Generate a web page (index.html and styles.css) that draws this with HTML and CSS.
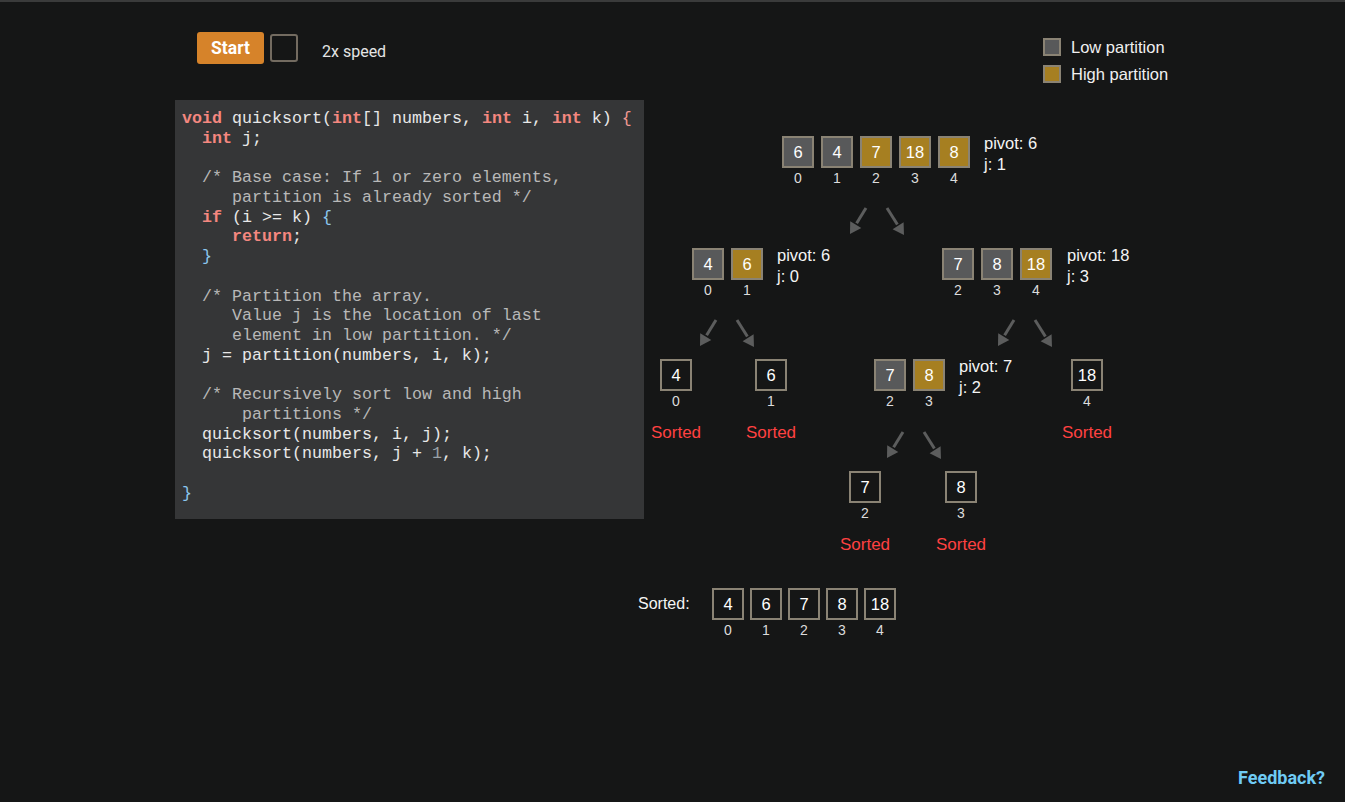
FILE: index.html
```html
<!DOCTYPE html>
<html lang="en">
<head>
<meta charset="utf-8">
<title>Quicksort</title>
<link rel="stylesheet" href="styles.css">
</head>
<body>
<div class="wrap">
  <header class="header">
    <div class="controls">
      <button class="start">Start</button>
      <span class="check"></span>
      <span class="speed">2x speed</span>
    </div>
    <div class="legend">
      <div class="legend-row"><span class="swatch low"></span>Low partition</div>
      <div class="legend-row"><span class="swatch high"></span>High partition</div>
    </div>
  </header>
  <main class="main">
<pre class="code"><span class="kw">void</span> quicksort(<span class="kw">int</span>[] numbers, <span class="kw">int</span> i, <span class="kw">int</span> k) <span class="br1">{</span>
  <span class="kw">int</span> j;

  <span class="cm">/* Base case: If 1 or zero elements,
     partition is already sorted */</span>
  <span class="kw">if</span> (i &gt;= k) <span class="br">{</span>
     <span class="kw">return</span>;
  <span class="br">}</span>

  <span class="cm">/* Partition the array.
     Value j is the location of last
     element in low partition. */</span>
  j = partition(numbers, i, k);

  <span class="cm">/* Recursively sort low and high
      partitions */</span>
  quicksort(numbers, i, j);
  quicksort(numbers, j + <span class="num">1</span>, k);

<span class="br">}</span></pre>
    <div class="canvas">
      <div class="node n-root">
        <div class="cells">
          <div class="cell"><div class="box low">6</div><div class="idx">0</div></div>
          <div class="cell"><div class="box low">4</div><div class="idx">1</div></div>
          <div class="cell"><div class="box high">7</div><div class="idx">2</div></div>
          <div class="cell"><div class="box high">18</div><div class="idx">3</div></div>
          <div class="cell"><div class="box high">8</div><div class="idx">4</div></div>
        </div>
        <div class="info">pivot: 6<br>j: 1</div>
      </div>
      <svg class="arrows a-root" viewBox="0 0 58 30" width="58" height="30"><line x1="18" y1="1" x2="8.6" y2="16.3"/><polygon points="2,27 13.3,21 2.2,14.2"/><line x1="39" y1="1" x2="49.4" y2="17.5"/><polygon points="56,28 55.6,15.2 44.6,22.2"/></svg>

      <div class="node n-l2a">
        <div class="cells">
          <div class="cell"><div class="box low">4</div><div class="idx">0</div></div>
          <div class="cell"><div class="box high">6</div><div class="idx">1</div></div>
        </div>
        <div class="info">pivot: 6<br>j: 0</div>
      </div>
      <div class="node n-l2b">
        <div class="cells">
          <div class="cell"><div class="box low">7</div><div class="idx">2</div></div>
          <div class="cell"><div class="box low">8</div><div class="idx">3</div></div>
          <div class="cell"><div class="box high">18</div><div class="idx">4</div></div>
        </div>
        <div class="info">pivot: 18<br>j: 3</div>
      </div>
      <svg class="arrows a-l2a" viewBox="0 0 58 30" width="58" height="30"><line x1="18" y1="1" x2="8.6" y2="16.3"/><polygon points="2,27 13.3,21 2.2,14.2"/><line x1="39" y1="1" x2="49.4" y2="17.5"/><polygon points="56,28 55.6,15.2 44.6,22.2"/></svg>
      <svg class="arrows a-l2b" viewBox="0 0 58 30" width="58" height="30"><line x1="18" y1="1" x2="8.6" y2="16.3"/><polygon points="2,27 13.3,21 2.2,14.2"/><line x1="39" y1="1" x2="49.4" y2="17.5"/><polygon points="56,28 55.6,15.2 44.6,22.2"/></svg>

      <div class="leaf lf-4"><div class="box">4</div><div class="idx">0</div><div class="sorted">Sorted</div></div>
      <div class="leaf lf-6"><div class="box">6</div><div class="idx">1</div><div class="sorted">Sorted</div></div>
      <div class="node n-l3">
        <div class="cells">
          <div class="cell"><div class="box low">7</div><div class="idx">2</div></div>
          <div class="cell"><div class="box high">8</div><div class="idx">3</div></div>
        </div>
        <div class="info">pivot: 7<br>j: 2</div>
      </div>
      <div class="leaf lf-18"><div class="box">18</div><div class="idx">4</div><div class="sorted">Sorted</div></div>
      <svg class="arrows a-l3" viewBox="0 0 58 30" width="58" height="30"><line x1="18" y1="1" x2="8.6" y2="16.3"/><polygon points="2,27 13.3,21 2.2,14.2"/><line x1="39" y1="1" x2="49.4" y2="17.5"/><polygon points="56,28 55.6,15.2 44.6,22.2"/></svg>

      <div class="leaf lf-7"><div class="box">7</div><div class="idx">2</div><div class="sorted">Sorted</div></div>
      <div class="leaf lf-8"><div class="box">8</div><div class="idx">3</div><div class="sorted">Sorted</div></div>

      <div class="result">
        <span class="result-label">Sorted:</span>
        <div class="cells cells-tight">
          <div class="cell"><div class="box">4</div><div class="idx">0</div></div>
          <div class="cell"><div class="box">6</div><div class="idx">1</div></div>
          <div class="cell"><div class="box">7</div><div class="idx">2</div></div>
          <div class="cell"><div class="box">8</div><div class="idx">3</div></div>
          <div class="cell"><div class="box">18</div><div class="idx">4</div></div>
        </div>
      </div>
    </div>
  </main>
</div>
<a class="feedback" href="#">Feedback?</a>
</body>
</html>
```
FILE: styles.css
```css
html, body {
  margin: 0;
  padding: 0;
  background: #151616;
  height: 100%;
}
body {
  border-top: 2px solid #3a3b3b;
  box-sizing: border-box;
  font-family: "Liberation Sans", Arial, sans-serif;
  color: #f2f2f2;
  position: relative;
  overflow: hidden;
}
.wrap {
  margin-left: 175px;
}
.header {
  display: grid;
  grid-template-columns: 868px auto;
  height: 98px;
  box-sizing: border-box;
  padding-top: 30px;
}
.controls {
  display: flex;
  align-items: flex-start;
  padding-left: 22px;
}
.start {
  width: 67px;
  height: 32px;
  border: none;
  border-radius: 3px;
  background: #d6832a;
  color: #fff;
  font-family: Roboto, "Liberation Sans", sans-serif;
  font-weight: 700;
  font-size: 17.5px;
  line-height: 32px;
  padding: 0 0 2px 0;
  cursor: pointer;
}
.check {
  width: 28px;
  height: 28px;
  box-sizing: border-box;
  margin-top: 2px;
  margin-left: 6px;
  border: 2px solid #736b60;
  border-radius: 3px;
}
.speed {
  margin-left: 24px;
  margin-top: 10px;
  font-family: Roboto, "Liberation Sans", sans-serif;
  font-size: 16px;
  line-height: 19px;
  color: #e4e4e4;
}
.legend {
  padding-top: 6px;
  display: flex;
  flex-direction: column;
  gap: 9px;
}
.legend-row {
  display: flex;
  align-items: center;
  font-size: 16.5px;
  line-height: 18px;
  color: #f0f0f0;
}
.swatch {
  width: 18px;
  height: 18px;
  box-sizing: border-box;
  border: 2px solid #8a8374;
  margin-right: 10px;
}
.swatch.low { background: #58595a; }
.swatch.high { background: #a67f21; }

.main {
  display: flex;
  align-items: flex-start;
}
.code {
  margin: 0;
  width: 469px;
  box-sizing: border-box;
  padding: 9px 7px 15px 7px;
  background: #353637;
  font-family: "Liberation Mono", "Courier New", monospace;
  font-size: 16.67px;
  line-height: 19.74px;
  color: #e8e8e8;
  white-space: pre;
}
.kw { color: #f4877f; font-weight: 700; }
.cm { color: #b8b8b8; }
.br { color: #8cc6ee; }
.br1 { color: #f09a92; }
.num { color: #9aa2a8; }

.canvas {
  position: relative;
  width: 560px;
  height: 560px;
  flex: none;
}
.node {
  position: absolute;
  display: flex;
  align-items: flex-start;
}
.cells {
  display: flex;
  gap: 7px;
}
.cells-tight { gap: 6px; }
.cell {
  display: flex;
  flex-direction: column;
  align-items: center;
  width: 32px;
}
.box {
  width: 32px;
  height: 32px;
  box-sizing: border-box;
  border: 2px solid #8a8374;
  display: flex;
  align-items: center;
  justify-content: center;
  font-size: 16.5px;
  color: #fff;
}
.box.low { background: #58595a; }
.box.high { background: #a67f21; }
.idx {
  margin-top: 3px;
  font-size: 14px;
  line-height: 15px;
  color: #dcdcdc;
}
.info {
  margin-left: 14px;
  margin-top: -3px;
  font-size: 16.5px;
  line-height: 21px;
  color: #f4f4f4;
}
.n-root { left: 138px; top: 36px; }
.n-l2a { left: 48px; top: 148px; }
.n-l2b { left: 298px; top: 148px; }
.n-l2b .info { margin-left: 15px; }
.n-l3 { left: 230px; top: 259px; }

.leaf {
  position: absolute;
  width: 60px;
  display: flex;
  flex-direction: column;
  align-items: center;
}
.sorted {
  margin-top: 14px;
  font-size: 17px;
  line-height: 19px;
  color: #ff4141;
}
.lf-4 { left: 2px; top: 259px; }
.lf-6 { left: 97px; top: 259px; }
.lf-18 { left: 413px; top: 259px; }
.lf-7 { left: 191px; top: 371px; }
.lf-8 { left: 287px; top: 371px; }

.arrows {
  position: absolute;
}
.arrows line {
  stroke: #5c5d5d;
  stroke-width: 3;
}
.arrows polygon {
  fill: #5c5d5d;
}
.a-root { left: 204px; top: 107px; }
.a-l2a { left: 54px; top: 219px; }
.a-l2b { left: 352px; top: 219px; }
.a-l3 { left: 241px; top: 331px; }

.result {
  position: absolute;
  left: -6px;
  top: 488px;
  display: flex;
  align-items: flex-start;
}
.result-label {
  width: 74px;
  font-size: 16px;
  line-height: 19px;
  margin-top: 6px;
  color: #f4f4f4;
}

.feedback {
  position: absolute;
  right: 20px;
  bottom: 14px;
  font-family: Roboto, "Liberation Sans", sans-serif;
  font-weight: 700;
  font-size: 18px;
  color: #6fcbf4;
  text-decoration: none;
}
```
